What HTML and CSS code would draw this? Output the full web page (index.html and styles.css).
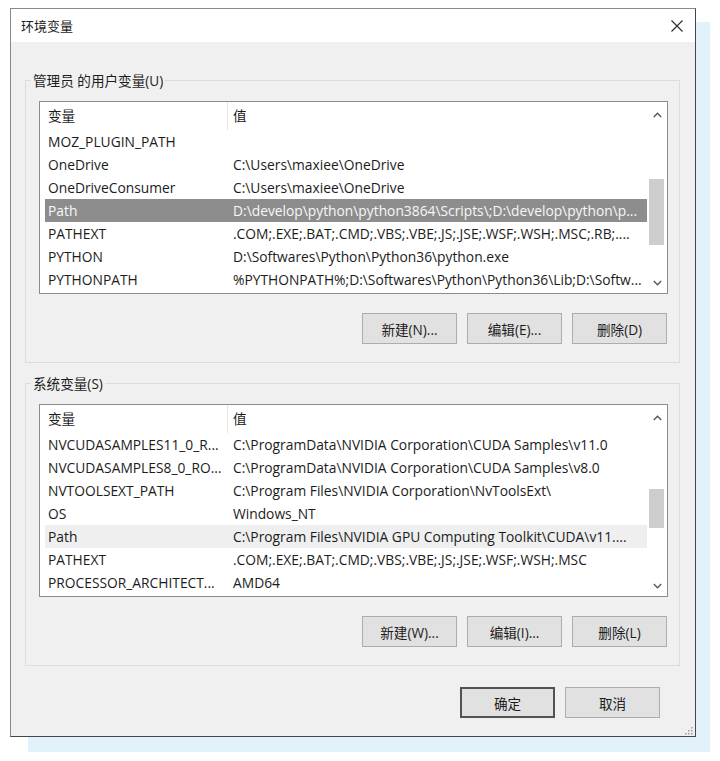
FILE: index.html
```html
<!DOCTYPE html>
<html lang="zh-CN">
<head>
  <meta charset="UTF-8">
  <meta name="viewport" content="width=device-width, initial-scale=1.0">
  <title>环境变量</title>
  <link rel="stylesheet" href="styles.css">
</head>
<body>
  <div class="backdrop">
    <div class="dialog">
      <div class="titlebar">
        <span class="title">环境变量</span>
        <svg class="close-icon" width="12" height="12" viewBox="0 0 12 12">
          <path d="M0.5 0.5 L11.5 11.5 M11.5 0.5 L0.5 11.5" stroke="#2a2a2a" stroke-width="1.1" fill="none"/>
        </svg>
      </div>

      <div class="dialog-body">
        <!-- 用户变量 -->
        <div class="group">
          <div class="group-title">管理员 的用户变量(U)</div>
          <div class="listview">
            <div class="list-main">
              <div class="list-head"><span class="col-name">变量</span><span class="col-value">值</span></div>
              <div class="row"><span class="col-name">MOZ_PLUGIN_PATH</span><span class="col-value"></span></div>
              <div class="row"><span class="col-name">OneDrive</span><span class="col-value">C:\Users\maxiee\OneDrive</span></div>
              <div class="row"><span class="col-name">OneDriveConsumer</span><span class="col-value">C:\Users\maxiee\OneDrive</span></div>
              <div class="row selected"><span class="col-name">Path</span><span class="col-value">D:\develop\python\python3864\Scripts\;D:\develop\python\p...</span></div>
              <div class="row"><span class="col-name">PATHEXT</span><span class="col-value">.COM;.EXE;.BAT;.CMD;.VBS;.VBE;.JS;.JSE;.WSF;.WSH;.MSC;.RB;....</span></div>
              <div class="row"><span class="col-name">PYTHON</span><span class="col-value">D:\Softwares\Python\Python36\python.exe</span></div>
              <div class="row"><span class="col-name">PYTHONPATH</span><span class="col-value">%PYTHONPATH%;D:\Softwares\Python\Python36\Lib;D:\Softw...</span></div>
            </div>
            <div class="scrollbar">
              <div class="scroll-btn scroll-up">
                <svg width="9" height="6" viewBox="0 0 9 6"><path d="M0.8 5 L4.5 1.2 L8.2 5" stroke="#555" stroke-width="1.3" fill="none"/></svg>
              </div>
              <div class="scroll-track"><div class="scroll-thumb" style="margin-top: 51px; height: 66px;"></div></div>
              <div class="scroll-btn scroll-down">
                <svg width="9" height="6" viewBox="0 0 9 6"><path d="M0.8 1 L4.5 4.8 L8.2 1" stroke="#555" stroke-width="1.3" fill="none"/></svg>
              </div>
            </div>
          </div>
          <div class="button-row">
            <button class="btn">新建(N)...</button>
            <button class="btn">编辑(E)...</button>
            <button class="btn">删除(D)</button>
          </div>
        </div>

        <!-- 系统变量 -->
        <div class="group">
          <div class="group-title">系统变量(S)</div>
          <div class="listview">
            <div class="list-main">
              <div class="list-head"><span class="col-name">变量</span><span class="col-value">值</span></div>
              <div class="row"><span class="col-name">NVCUDASAMPLES11_0_R...</span><span class="col-value">C:\ProgramData\NVIDIA Corporation\CUDA Samples\v11.0</span></div>
              <div class="row"><span class="col-name">NVCUDASAMPLES8_0_RO...</span><span class="col-value">C:\ProgramData\NVIDIA Corporation\CUDA Samples\v8.0</span></div>
              <div class="row"><span class="col-name">NVTOOLSEXT_PATH</span><span class="col-value">C:\Program Files\NVIDIA Corporation\NvToolsExt\</span></div>
              <div class="row"><span class="col-name">OS</span><span class="col-value">Windows_NT</span></div>
              <div class="row hover"><span class="col-name">Path</span><span class="col-value">C:\Program Files\NVIDIA GPU Computing Toolkit\CUDA\v11....</span></div>
              <div class="row"><span class="col-name">PATHEXT</span><span class="col-value">.COM;.EXE;.BAT;.CMD;.VBS;.VBE;.JS;.JSE;.WSF;.WSH;.MSC</span></div>
              <div class="row"><span class="col-name">PROCESSOR_ARCHITECT...</span><span class="col-value">AMD64</span></div>
            </div>
            <div class="scrollbar">
              <div class="scroll-btn scroll-up">
                <svg width="9" height="6" viewBox="0 0 9 6"><path d="M0.8 5 L4.5 1.2 L8.2 5" stroke="#555" stroke-width="1.3" fill="none"/></svg>
              </div>
              <div class="scroll-track"><div class="scroll-thumb" style="margin-top: 58px; height: 39px;"></div></div>
              <div class="scroll-btn scroll-down">
                <svg width="9" height="6" viewBox="0 0 9 6"><path d="M0.8 1 L4.5 4.8 L8.2 1" stroke="#555" stroke-width="1.3" fill="none"/></svg>
              </div>
            </div>
          </div>
          <div class="button-row">
            <button class="btn">新建(W)...</button>
            <button class="btn">编辑(I)...</button>
            <button class="btn">删除(L)</button>
          </div>
        </div>

        <div class="dialog-actions">
          <button class="btn btn-default">确定</button>
          <button class="btn">取消</button>
        </div>

        <svg class="grip" width="9" height="9" viewBox="0 0 9 9">
          <rect x="7" y="1" width="1.5" height="1.5" fill="#9a9a9a"/>
          <rect x="4" y="4" width="1.5" height="1.5" fill="#9a9a9a"/>
          <rect x="7" y="4" width="1.5" height="1.5" fill="#9a9a9a"/>
          <rect x="1" y="7" width="1.5" height="1.5" fill="#9a9a9a"/>
          <rect x="4" y="7" width="1.5" height="1.5" fill="#9a9a9a"/>
          <rect x="7" y="7" width="1.5" height="1.5" fill="#9a9a9a"/>
        </svg>
      </div>
    </div>
  </div>
</body>
</html>
```

FILE: styles.css
```css
* {
  margin: 0;
  padding: 0;
  box-sizing: border-box;
}

body {
  background-color: #fff;
  font-family: "Open Sans", "Noto Sans CJK SC", sans-serif;
  font-size: 13px;
  color: #1c1c1c;
  width: 720px;
  height: 761px;
  overflow: hidden;
}

button {
  font: inherit;
  color: inherit;
}

.backdrop {
  display: flex;
  margin: 22px 0 0 28px;
  width: 682px;
  height: 730px;
  background-color: #e2f2fb;
}

.dialog {
  flex: none;
  display: flex;
  flex-direction: column;
  margin: -14px 0 0 -18px;
  width: 686px;
  height: 729px;
  border: 1px solid #8a8a8a;
  border-right-color: #464646;
  border-bottom-color: #464646;
  background-color: #f0f0f0;
}

.titlebar {
  display: flex;
  align-items: center;
  justify-content: space-between;
  height: 33px;
  padding: 0 12px 0 10px;
  background-color: #fff;
}

.dialog-body {
  flex: 1;
  display: flex;
  flex-direction: column;
  padding: 0 15px 0 14px;
}

.group {
  margin-top: 38px;
  border: 1px solid #dcdcdc;
  padding: 0 11px 18px 13px;
}

.group + .group {
  margin-top: 20px;
}

.group-title {
  width: fit-content;
  margin: -9px 0 12px -8px;
  padding: 0 2px;
  font-size: 13.6px;
  line-height: 17px;
  background-color: #f0f0f0;
}

.listview {
  display: flex;
  height: 193px;
  border: 1px solid #8c8c8c;
  background-color: #fff;
  font-size: 13.8px;
}

.list-main {
  flex: 1;
  min-width: 0;
  padding: 0 2px 0 5px;
}

.list-head {
  display: flex;
  height: 28px;
  line-height: 28px;
  font-size: 13.6px;
}

.list-head .col-name {
  width: 183px;
  padding-left: 3px;
  border-right: 1px solid #e5e5e5;
}

.list-head .col-value {
  padding-left: 5px;
}

.row {
  display: flex;
  height: 23px;
  line-height: 23px;
  white-space: nowrap;
}

.row .col-name {
  width: 183px;
  flex: none;
  padding-left: 3px;
  overflow: hidden;
}

.row .col-value {
  flex: 1;
  padding-left: 5px;
  overflow: hidden;
}

.row.selected {
  background-color: #8d8d8d;
  color: #f7f7f7;
}

.row.hover {
  background-color: #efefef;
}

.scrollbar {
  width: 18px;
  display: flex;
  flex-direction: column;
}

.scroll-btn {
  display: flex;
  align-items: center;
  justify-content: center;
  padding-right: 2px;
}

.scroll-up {
  height: 26px;
}

.scroll-down {
  height: 20px;
}

.scroll-track {
  flex: 1;
}

.scroll-thumb {
  width: 15px;
  background-color: #cdcdcd;
}

.button-row {
  display: flex;
  justify-content: flex-end;
  gap: 10px;
  margin-top: 19px;
  padding-right: 1px;
}

.btn {
  width: 95px;
  height: 31px;
  border: 1px solid #adadad;
  background-color: #e1e1e1;
  font-size: 13.6px;
}

.btn-default {
  border: 2px solid #525252;
}

.dialog-actions {
  display: flex;
  justify-content: flex-end;
  gap: 10px;
  margin-top: 21px;
  padding-right: 20px;
}

.grip {
  margin-top: auto;
  margin-right: -13px;
  margin-bottom: 1px;
  align-self: flex-end;
}
```
